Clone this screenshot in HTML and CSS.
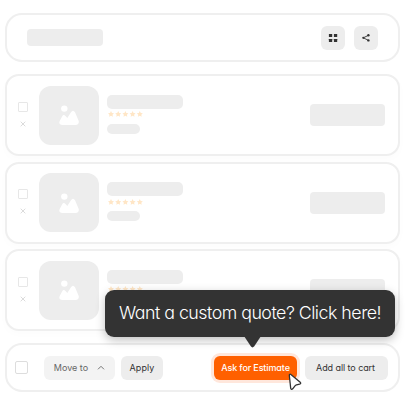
FILE: index.html
```html
<!DOCTYPE html>
<html lang="en">
<head>
<meta charset="utf-8">
<title>Quote list</title>
<link rel="stylesheet" href="styles.css">
</head>
<body>
<svg class="defs" aria-hidden="true">
  <symbol id="cross" viewBox="0 0 6 6"><path d="M.7.7l4.6 4.6M5.3.7L.7 5.3" stroke="#d2d2d2" stroke-width=".8"/></symbol>
  <symbol id="photo" viewBox="0 0 20 20"><circle cx="5.3" cy="3.6" r="3.2"/><path d="M.6 16.2L3.2 11.200Q4.600 8.800 6.500 10.900L8.300 12.900L12 7.200Q14 4.200 16 7.200L19.500 15.400C20.500 18 19 19.900 16.500 19.900H3.500C.8 19.900-.3 18.300.6 16.200Z"/></symbol>
  <symbol id="stars" viewBox="0 0 36 6"><g fill="#ffe6c6"><path id="s" d="M3 0l.95 1.900 2.050.3-1.500 1.500.4 2.100L3 4.800 1.100 5.800l.4-2.100L0 2.200l2.050-.3z"/><use href="#s" x="7.200"/><use href="#s" x="14.400"/><use href="#s" x="21.600"/><use href="#s" x="28.800"/></g></symbol>
</svg>
<main class="page">
  <header class="panel header">
    <div class="bone heading"></div>
    <div class="tools">
      <div class="tool"><svg width="10" height="10" viewBox="0 0 10 10" fill="#333"><rect x=".9" y=".9" width="3.300" height="3" rx=".2"/><rect x="5.900" y=".9" width="3.300" height="3" rx=".2"/><rect x=".9" y="6" width="3.300" height="3" rx=".2"/><rect x="5.900" y="6" width="3.300" height="3" rx=".2"/></svg></div>
      <div class="tool"><svg width="10" height="10" viewBox="0 0 10 10" fill="#333"><path d="M7.500 2.300L2.300 4.800l5.200 2.600" fill="none" stroke="#333" stroke-width=".9"/><circle cx="7.400" cy="2.300" r="1.200"/><circle cx="2.300" cy="4.800" r="1.100"/><circle cx="7.400" cy="7.400" r="1.200"/></svg></div>
    </div>
  </header>
  <section class="list">
    <article class="panel item">
      <div class="marks"><span class="box"></span><svg class="cross"><use href="#cross"/></svg></div>
      <div class="thumb"><svg class="photo"><use href="#photo"/></svg></div>
      <div class="info"><div class="bone name"></div><svg class="stars"><use href="#stars"/></svg><div class="bone price"></div></div>
      <div class="bone action"></div>
    </article>
    <article class="panel item">
      <div class="marks"><span class="box"></span><svg class="cross"><use href="#cross"/></svg></div>
      <div class="thumb"><svg class="photo"><use href="#photo"/></svg></div>
      <div class="info"><div class="bone name"></div><svg class="stars"><use href="#stars"/></svg><div class="bone price"></div></div>
      <div class="bone action"></div>
    </article>
    <article class="panel item">
      <div class="marks"><span class="box"></span><svg class="cross"><use href="#cross"/></svg></div>
      <div class="thumb"><svg class="photo"><use href="#photo"/></svg></div>
      <div class="info"><div class="bone name"></div><svg class="stars"><use href="#stars"/></svg><div class="bone price"></div></div>
      <div class="bone action"></div>
    </article>
  </section>
  <footer class="panel bar">
    <span class="check"></span>
    <div class="btn move"><span>Move to</span><svg width="8" height="5" viewBox="0 0 8 5"><path d="M1 4.300l3-3 3 3" fill="none" stroke="#666" stroke-width=".9"/></svg></div>
    <div class="btn apply">Apply</div>
    <div class="btn ask">Ask for Estimate
      <svg class="cursor" viewBox="0 0 16 18"><path d="M2.300 2.300C2.300 1.200 3.100.9 3.900 1.600L13.200 9.200c.9.800.6 1.700-.5 1.900l-3.200.7c-.7.2-1.100.5-1.500 1l-2.300 3c-.8.9-1.900.6-2-.6z" fill="#fff" stroke="#333" stroke-width="1.300"/></svg>
    </div>
    <div class="btn add">Add all to cart</div>
    <div class="tooltip">Want a custom quote? Click here!
      <svg class="tail" viewBox="0 0 18 12"><path d="M0 0h17L10.300 10.300q-1.800 2.200-3.500 0z" fill="#333"/></svg>
    </div>
  </footer>
</main>
</body>
</html>
```

FILE: styles.css
```css
* { box-sizing: border-box; }
body {
  margin: 0;
  background: #fff;
  color: #333;
  font-family: Inter, "Liberation Sans", sans-serif;
  font-feature-settings: "cv11";
}
svg { display: block; flex: none; }
.defs { position: absolute; width: 0; height: 0; }
.page { width: 405px; height: 405px; padding: 13px 5px 0; overflow: hidden; }
.panel {
  display: flex;
  align-items: center;
  border: 2px solid #efefef;
  border-radius: 17px;
  background: #fff;
}
.bone { background: #ededed; border-radius: 5px; }
.header { height: 49px; padding: 0 20px; justify-content: space-between; }
.heading { width: 76px; height: 17px; border-radius: 4px; }
.tools { display: flex; gap: 9px; }
.tool {
  display: flex;
  align-items: center;
  justify-content: center;
  width: 24px;
  height: 24px;
  border-radius: 6px;
  background: #ededed;
}
.list { display: grid; gap: 5.5px; margin-top: 12px; }
.item { height: 82px; padding: 0 13px 0 11px; border-radius: 14px; box-shadow: 0 3px 8px rgba(0, 0, 0, .015); }
.marks { display: flex; flex-direction: column; align-items: center; gap: 9px; width: 9px; margin: 0 1px 2px 0; }
.box { width: 10px; height: 10px; border: 1px solid #e7e7e7; border-radius: 1px; }
.cross { width: 6px; height: 6px; }
.thumb {
  display: flex;
  align-items: center;
  justify-content: center;
  width: 60px;
  height: 59px;
  margin-left: 11px;
  border-radius: 12px;
  background: #ededed;
}
.photo { width: 20px; height: 20px; fill: #fff; }
.info { margin: 0 0 2px 8px; }
.name { width: 76px; height: 14px; }
.stars { width: 36px; height: 6px; margin: 2.500px 0 6.500px .500px; }
.price { width: 33px; height: 10px; }
.action { width: 75px; height: 22px; margin-left: auto; border-radius: 4px; }
.bar { position: relative; height: 49px; margin-top: 12px; padding: 0 10px 0 8px; }
.check { width: 13px; height: 13px; border: 1px solid #ddd; border-radius: 2px; }
.btn {
  display: flex;
  align-items: center;
  justify-content: center;
  height: 24px;
  padding-bottom: 1px;
  border-radius: 6px;
  background: #ededed;
  font-size: 9px;
  font-weight: 400;
  white-space: nowrap;
}
.move { width: 71px; margin-left: 16px; gap: 9px; background: #f3f3f3; color: #666; }
.apply { width: 42px; margin-left: 6px; letter-spacing: .1px; }
.ask {
  position: relative;
  width: 83px;
  margin-left: auto;
  background: #ff6000;
  color: #fff;
  font-weight: 500;
  letter-spacing: -.12px;
  box-shadow: 0 0 0 3px #ffe7dc;
}
.cursor { position: absolute; left: 73px; top: 17px; width: 16px; height: 18px; }
.add { width: 83px; margin-left: 8px; padding-right: 2px; letter-spacing: -.08px; }
.tooltip {
  position: absolute;
  left: 98px;
  top: -55px;
  width: 290px;
  height: 47px;
  border-radius: 9px;
  background: #333;
  box-shadow: 0 3px 10px rgba(0, 0, 0, .25);
  color: #fff;
  font-size: 17.800px;
  font-weight: 300;
  letter-spacing: -.5px;
  line-height: 46px;
  text-align: center;
  white-space: nowrap;
}
.tail { position: absolute; left: 139px; top: 46px; width: 18px; height: 12px; }
```
